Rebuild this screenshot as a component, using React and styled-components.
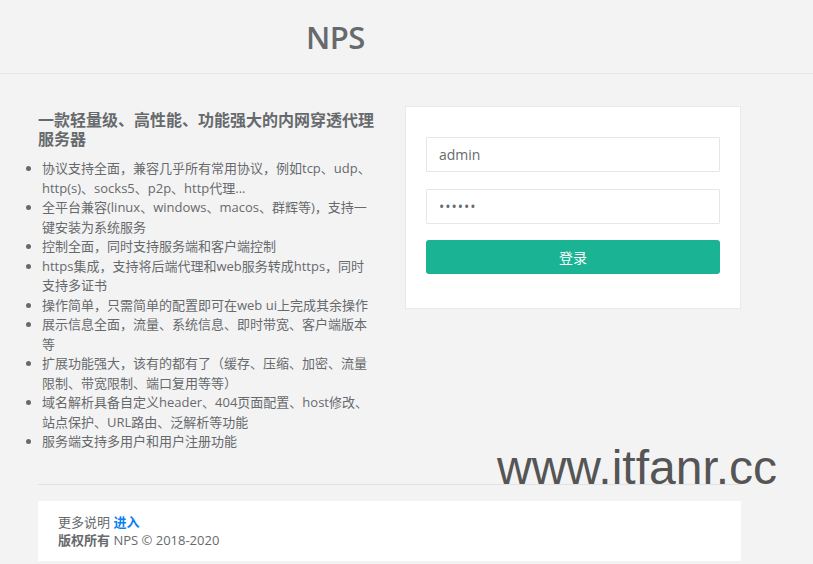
import React from "react";
import styled, { createGlobalStyle } from "styled-components";

const GlobalStyle = createGlobalStyle`
  html, body {
    margin: 0;
    padding: 0;
    background: #f3f3f4;
  }
  body {
    font-family: "Open Sans", "Noto Sans CJK SC", sans-serif;
    color: #676a6c;
    font-size: 13px;
  }
  * { box-sizing: border-box; }
`;

const Page = styled.div`
  position: relative;
  min-height: 564px;
`;

const Header = styled.header`
  height: 74px;
  border-bottom: 1px solid #e7e7e7;
  display: flex;
  align-items: center;
  padding-left: 306px;
`;

const Brand = styled.h1`
  margin: 0;
  font-size: 31px;
  font-weight: 600;
  color: #676a6c;
  letter-spacing: -0.5px;
`;

const Main = styled.main`
  display: grid;
  grid-template-columns: 338px 336px;
  column-gap: 29px;
  margin-left: 38px;
  padding-top: 32px;
  width: 703px;
  align-items: start;
`;

const Intro = styled.section``;

const Title = styled.h3`
  margin: 5px 0 10px;
  font-size: 16px;
  line-height: 1.2;
  font-weight: 700;
  color: #676a6c;
`;

const FeatureList = styled.ul`
  margin: 0;
  padding-left: 4px;
  line-height: 19.5px;
  font-size: 13px;
  li { margin: 0; }
`;

const LoginCard = styled.div`
  background: #fff;
  border: 1px solid #e7eaec;
  padding: 30px 20px 34px;
`;

const Field = styled.input`
  display: block;
  width: 100%;
  height: 35px;
  margin-bottom: 17px;
  padding: 6px 12px;
  border: 1px solid #e5e6e7;
  border-radius: 1px;
  font-family: "Open Sans", sans-serif;
  font-size: 14px;
  color: #676a6c;
  background: #fff;
  outline: none;
  &[type="password"] { margin-bottom: 16px; letter-spacing: 1px; }
`;

const SubmitButton = styled.button`
  display: block;
  width: 100%;
  height: 34px;
  border: none;
  border-radius: 3px;
  background: #1ab394;
  color: #fff;
  font-family: "Open Sans", "Noto Sans CJK SC", sans-serif;
  font-size: 14px;
  cursor: pointer;
`;

const Divider = styled.hr`
  width: 703px;
  margin: 32px 0 16px 38px;
  border: none;
  border-top: 1px solid #e2e2e2;
`;

const Footer = styled.footer`
  width: 703px;
  margin-left: 38px;
  background: #fff;
  padding: 12px 20px 11px;
  font-size: 13px;
  line-height: 18.5px;
  color: #676a6c;
  strong { font-weight: 700; }
  a {
    color: #0b7ef0;
    font-weight: 700;
    text-decoration: none;
  }
`;

const Watermark = styled.div`
  position: absolute;
  left: 497px;
  top: 444px;
  font-family: "Liberation Sans", Arial, sans-serif;
  font-size: 48px;
  line-height: 1;
  color: #555;
  pointer-events: none;
`;

const features = [
  "协议支持全面，兼容几乎所有常用协议，例如tcp、udp、http(s)、socks5、p2p、http代理...",
  "全平台兼容(linux、windows、macos、群辉等)，支持一键安装为系统服务",
  "控制全面，同时支持服务端和客户端控制",
  "https集成，支持将后端代理和web服务转成https，同时支持多证书",
  "操作简单，只需简单的配置即可在web ui上完成其余操作",
  "展示信息全面，流量、系统信息、即时带宽、客户端版本等",
  "扩展功能强大，该有的都有了（缓存、压缩、加密、流量限制、带宽限制、端口复用等等）",
  "域名解析具备自定义header、404页面配置、host修改、站点保护、URL路由、泛解析等功能",
  "服务端支持多用户和用户注册功能",
];

export default function App() {
  return (
    <Page>
      <GlobalStyle />
      <Header>
        <Brand>NPS</Brand>
      </Header>
      <Main>
        <Intro>
          <Title>一款轻量级、高性能、功能强大的内网穿透代理服务器</Title>
          <FeatureList>
            {features.map((f) => (
              <li key={f}>{f}</li>
            ))}
          </FeatureList>
        </Intro>
        <LoginCard>
          <form onSubmit={(e) => e.preventDefault()}>
            <Field type="text" defaultValue="admin" />
            <Field type="password" defaultValue="123456" />
            <SubmitButton type="submit">登录</SubmitButton>
          </form>
        </LoginCard>
      </Main>
      <Divider />
      <Footer>
        <div>
          更多说明 <a href="#">进入</a>
        </div>
        <div>
          <strong>版权所有</strong> NPS © 2018-2020
        </div>
      </Footer>
      <Watermark>www.itfanr.cc</Watermark>
    </Page>
  );
}
